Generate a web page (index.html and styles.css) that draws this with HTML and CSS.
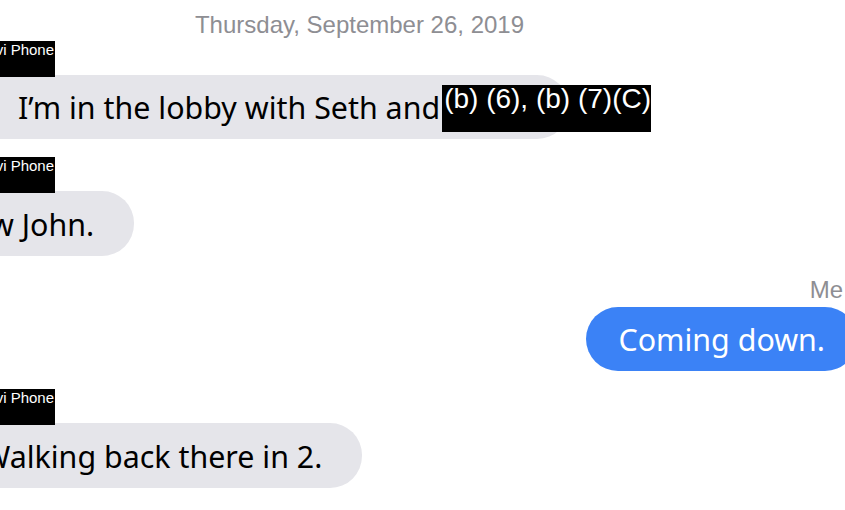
FILE: index.html
```html
<!DOCTYPE html>
<html>
<head>
<meta charset="utf-8">
<link rel="stylesheet" href="styles.css">
</head>
<body>
<div class="thread">
  <div class="date">Thursday, September 26, 2019</div>

  <div class="msg in first">
    <div class="sender"><span>vi Phone</span></div>
    <div class="bubble gray b1">I’m in the lobby with Seth and<span class="hole"><span class="redact">(b) (6), (b) (7)(C)</span></span></div>
  </div>

  <div class="msg in">
    <div class="sender"><span>vi Phone</span></div>
    <div class="bubble gray b2">w John.</div>
  </div>

  <div class="msg out">
    <div class="me">Me</div>
    <div class="bubble blue">Coming down.</div>
  </div>

  <div class="msg in">
    <div class="sender"><span>vi Phone</span></div>
    <div class="bubble gray b4">Walking back there in 2.</div>
  </div>
</div>
</body>
</html>
```

FILE: styles.css
```css
html, body {
  margin: 0;
  padding: 0;
  background: #ffffff;
}
body {
  width: 845px;
  height: 510px;
  overflow: hidden;
}
.thread {
  display: flex;
  flex-direction: column;
}
.date {
  font-family: "Liberation Sans", Arial, sans-serif;
  font-size: 24px;
  line-height: 24px;
  color: #8e8e93;
  text-align: center;
  padding-top: 13px;
  padding-right: 126px;
  height: 28px;
}
.msg {
  display: flex;
  flex-direction: column;
}
.msg.in {
  align-items: flex-start;
  margin-top: 18px;
}
.msg.in.first {
  margin-top: 0;
}
.msg.out {
  align-items: flex-end;
  margin-top: 22px;
}
.sender {
  width: 55px;
  height: 36px;
  background: #000;
  color: #fff;
  font-family: "Liberation Sans", Arial, sans-serif;
  font-size: 15px;
  line-height: 17px;
  display: flex;
  justify-content: flex-end;
  overflow: hidden;
  white-space: nowrap;
  margin-bottom: -2px;
  position: relative;
  z-index: 2;
}
.sender span {
  padding-right: 1px;
}
.me {
  font-family: "Liberation Sans", Arial, sans-serif;
  font-size: 24px;
  line-height: 24px;
  color: #8e8e93;
  margin-right: 2px;
  margin-bottom: 5px;
}
.bubble {
  height: 64px;
  border-radius: 32px;
  font-family: "Noto Sans", "Open Sans", sans-serif;
  font-size: 30.4px;
  line-height: 64px;
  white-space: nowrap;
  padding: 2px 38px 0;
  box-sizing: border-box;
  display: flex;
  align-items: center;
}
.gray {
  background: #e5e5ea;
  color: #000;
}
.blue {
  background: #3b82f6;
  color: #fff;
  padding: 2px 32px 0;
  margin-right: -12px;
}
.b1 {
  margin-left: -20px;
  border-top-left-radius: 0;
  border-bottom-left-radius: 0;
}
.b2 {
  margin-left: -48px;
  padding-right: 40px;
  height: 65px;
}
.b4 {
  margin-left: -56px;
  padding-right: 40px;
  height: 65px;
}
.hole {
  position: relative;
  display: inline-block;
  width: 91px;
  height: 64px;
}
.redact {
  position: absolute;
  left: 2px;
  top: 9px;
  width: 209px;
  height: 47px;
  background: #000;
  color: #fff;
  font-family: "Liberation Sans", Arial, sans-serif;
  font-size: 28px;
  line-height: 28px;
  padding-left: 2px;
  box-sizing: border-box;
  white-space: nowrap;
  z-index: 3;
}
```
